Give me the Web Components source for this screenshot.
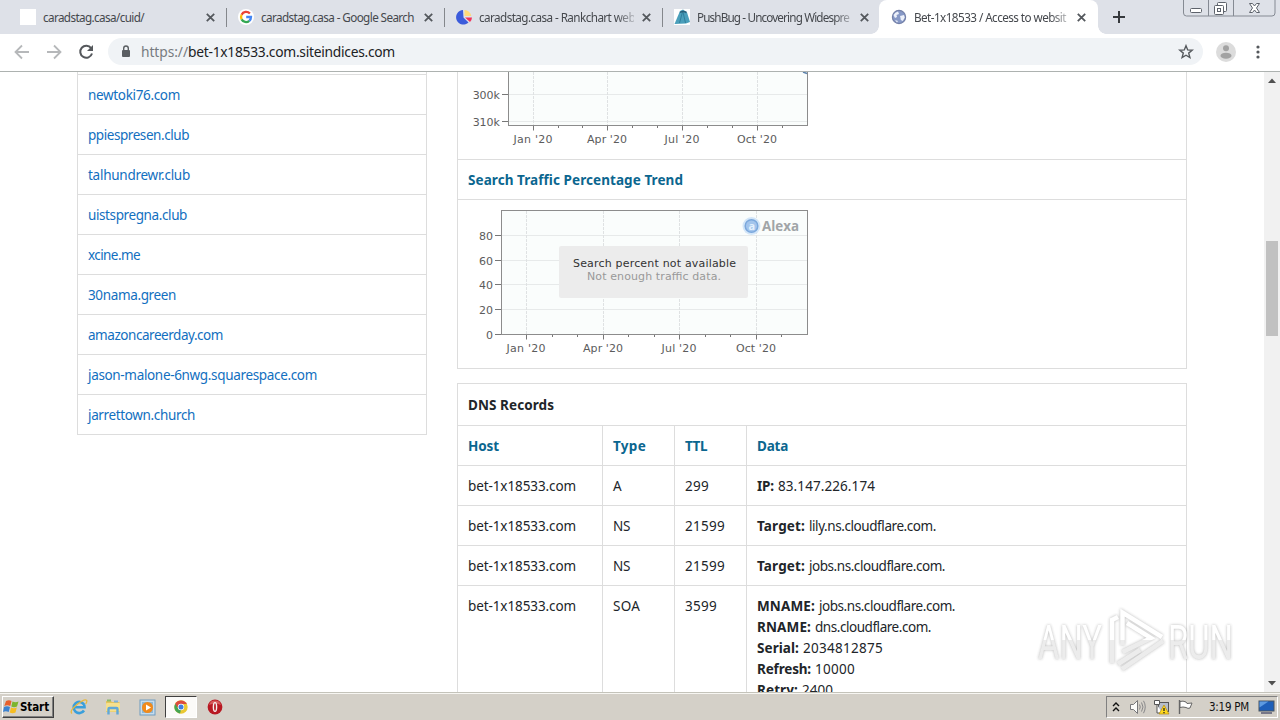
<!DOCTYPE html>
<html lang="en">
<head>
<meta charset="utf-8">
<title>Bet-1x18533 / Access to website</title>
<style>
body{
    margin: 0;
    width: 1280px;
    height: 720px;
    overflow: hidden;
    background: #fff;
    font-family: "Noto Sans", "Open Sans", sans-serif;
    font-size: 13.5px;
    color: #212529;
}
.ventana{
    position: relative;
    display: flex;
    flex-direction: column;
    height: 720px;
}
.pagina{
    display: flex;
    height: 620px;
    overflow: hidden;
}
.contenido{
    flex: 1;
    display: grid;
    grid-template-columns: 350px 730px;
    column-gap: 30px;
    padding-left: 77px;
    align-items: start;
    overflow: hidden;
    height: 620px;
}
</style>
</head>
<body>
<div class="ventana">
    <tab-strip>
        <browser-tab icon="blank" w="101">caradstag.casa/cuid/</browser-tab>
        <browser-tab icon="google" w="153">caradstag.casa - Google Search</browser-tab>
        <browser-tab icon="rank" w="156">caradstag.casa - Rankchart web</browser-tab>
        <browser-tab icon="bug" w="152" nosep>PushBug - Uncovering Widespre</browser-tab>
        <browser-tab icon="globe" w="152" active>Bet-1x18533 / Access to websit</browser-tab>
    </tab-strip>
    <tool-bar></tool-bar>
    <div class="pagina">
        <div class="contenido">
            <site-list></site-list>
            <main>
                <traffic-panel></traffic-panel>
                <dns-records></dns-records>
            </main>
        </div>
        <scroll-bar></scroll-bar>
    </div>
    <task-bar></task-bar>
    <water-mark></water-mark>
</div>

<script>
const icons={
    blank:`<svg width="16" height="16"><rect width="16" height="16" fill="#fff"/></svg>`,
    google:`<svg width="16" height="16" viewBox="0 0 16 16"><circle cx="8" cy="8" r="8" fill="#fff"/>
        <g fill="none" stroke-width="2.3"><path d="M11.9 4.6A5 5 0 0 0 3.6 5.8" stroke="#ea4335"/><path d="M3.6 5.8A5 5 0 0 0 3.6 10.4" stroke="#fbbc05"/>
        <path d="M3.6 10.4A5 5 0 0 0 11.3 11.8" stroke="#34a853"/><path d="M11.3 11.8A5 5 0 0 0 13 8H8.2" stroke="#4285f4"/></g></svg>`,
    rank:`<svg width="16" height="16" viewBox="0 0 16 16"><path d="M7 1A7.3 7.3 0 1 0 12.5 13.5L7.5 8.5Z" fill="#3b5bdb"/>
        <path d="M8.500 1A7 7 0 0 1 15.300 7H8.500Z" fill="#ffd97a"/><path d="M9 8.500H16A7 7 0 0 1 14 13Z" fill="#f0325a"/></svg>`,
    bug:`<svg width="16" height="16" viewBox="0 0 16 16"><rect width="16" height="16" fill="#fff"/><path d="M6 2l3-1.500 4 3 3 9.500-4 1.500L.5 15z" fill="#4a9fbb"/>
        <path d="M8.500 3l-3 11M9 3l2.500 11" stroke="#2f7f9c"/><path d="M6 3.500q3-2 6.500 0" stroke="#2a5f78" stroke-width="1.500" fill="none"/></svg>`,
    globe:`<svg width="16" height="16" viewBox="0 0 16 16"><circle cx="8" cy="8" r="6.600" fill="#8799c7" stroke="#7480a8" stroke-width="1.200"/>
        <path d="M2.500 6q1.500-3 4.500-3.500L8 5 5.500 6 6 8 4 9zM9 7l4-1 .8 2.500-2 3.500-2-1-.5-3zM4 11l3 1-1 1.500z" fill="#edf1fa"/></svg>`,
    close:`<svg width="9" height="9" viewBox="0 0 9 9"><path d="M.8 .8l7.400 7.400M8.200 .8L.8 8.200" stroke="#54585d" stroke-width="1.800"/></svg>`
};

// small base class, every element only brings its own markup
class Pieza extends HTMLElement{
    constructor(){
        super();
        this.attachShadow({mode: 'open'});
    }
    connectedCallback(){
        this.shadowRoot.innerHTML=this.render();
    }
}

class BrowserTab extends Pieza{
    render(){
        return `<style>
:host{ display: block; width: 218px; height: 34px; flex: none; }
.tab{
    display: grid;
    grid-template-columns: 16px 155px 9px;
    column-gap: 7px;
    align-items: center;
    padding-left: 12px;
    height: 34px;
    box-sizing: border-box;
    position: relative;
}
.titulo{
    font-size: 11.7px;
    line-height: 18px;
    overflow: hidden;
    white-space: nowrap;
    color: #45484d;
    -webkit-mask-image: linear-gradient(90deg,#000 137px,rgba(0,0,0,.3) 154px);
}
.corto{ -webkit-mask-image: none; }
.close{ display: flex; padding-left: 1px; width: 9px; }
svg{ display: block; flex: none; }
.raya{ position: absolute; right: -1px; top: 8px; width: 1px; height: 19px; background: #84878c; }
:host([active]) .tab{ background: #fff; border-radius: 8px 8px 0 0; margin: 0 0 0 -1px; padding-left: 12px; }
:host([active]) .tab::before, :host([active]) .tab::after{
    content: ""; position: absolute; bottom: 0; width: 8px; height: 8px;
}
:host([active]) .tab::before{ left: -8px; background: radial-gradient(circle at 0 0,transparent 7.5px,#fff 8px); }
:host([active]) .tab::after{ right: -8px; background: radial-gradient(circle at 100% 0,transparent 7.5px,#fff 8px); }
</style>
<div class="tab">${icons[this.getAttribute('icon')]}
    <div class="titulo ${this.getAttribute('icon')=='blank'||this.getAttribute('icon')=='google'?'corto':''}"><fit-text w="${this.getAttribute('w')}"><slot></slot></fit-text></div>
    <div class="close">${icons.close}</div>
    ${this.hasAttribute('active')||this.hasAttribute('nosep')?'':'<div class="raya"></div>'}
</div>`;
    }
}

class TabStrip extends Pieza{
    render(){
        return `<style>
:host{ display: flex; height: 34px; flex: none; background: #dee1e8; padding-left: 8px; }
.mas{ padding: 10px 0 0 14px; flex: 1; }
</style>
<slot></slot>
<div class="mas"><svg width="14" height="14"><path d="M7 1v12M1 7h12" stroke="#36393d" stroke-width="2"/></svg></div>
<svg width="97" height="18" fill="none" stroke="#858a93">
    <path d="M.5 0V13q0 3 3 3H89q3 0 3-3V0M25.500 0V16M50.500 0V16"/>
    <g stroke="#5d626b" fill="#fff"><rect x="7.500" y="8.500" width="11" height="4" rx="1"/>
    <rect x="34.500" y="2.500" width="9" height="9" rx="1"/><rect x="31.500" y="5.500" width="9" height="9" rx="1"/><rect x="34.500" y="8.500" width="3" height="3"/>
    <path d="M66.500 3.500h3l2 2.500 2-2.500h3L73.500 8l3 4.500h-3l-2-2.500-2 2.500h-3L69.500 8z"/></g>
</svg>`;
    }
}

class ToolBar extends Pieza{
    render(){
        return `<style>
:host{ display: flex; align-items: center; height: 38px; flex: none; box-sizing: border-box; border-bottom: 1px solid #adb2b0; background: #fff; padding: 0 15px 2px 14px; }
.nav{ display: flex; gap: 16px; width: 94px; }
.url{
    display: grid;
    grid-template-columns: 18px auto auto 1fr 16px;
    align-items: center;
    width: 1095px;
    height: 27px;
    box-sizing: border-box;
    padding: 0 9px 0 13px;
    border-radius: 14px;
    background: #f0f3f6;
}
.url fit-text{ font-size: 13.8px; line-height: 20px; }
.gris{ color: #777b80; }
.negro{ color: #202124; }
svg{ display: block; }
.avatar{ margin: 0 15px 0 13px; }
</style>
<div class="nav">
    <svg width="16" height="16" fill="none" stroke="#b6b8ba" stroke-width="1.800"><path d="M15 8H2M8 1.500L1.500 8 8 14.500"/></svg>
    <svg width="16" height="16" fill="none" stroke="#b6b8ba" stroke-width="1.800"><path d="M1 8H14M8 1.500L14.500 8 8 14.500"/></svg>
    <svg width="16" height="16"><path d="M13.100 4.200A6 6 0 1 0 14 9.500" fill="none" stroke="#55585c" stroke-width="2"/><path d="M15 1v6H9z" fill="#55585c"/></svg>
</div>
<div class="url">
    <svg width="10" height="13"><rect x="1" y="5" width="8" height="7" rx="1" fill="#5a5e62"/><path d="M2.700 5V3.300a2.300 2.300 0 0 1 4.600 0V5" fill="none" stroke="#5a5e62" stroke-width="1.400"/></svg>
    <fit-text class="gris" w="47" style="margin-left:2px">https://</fit-text>
    <fit-text class="negro" w="207">bet-1x18533.com.siteindices.com</fit-text>
    <span></span>
    <svg width="16" height="16" viewBox="0 0 16 16"><path d="M8 1.700l1.700 4.200 4.500.3-3.500 2.900 1.200 4.500L8 11.200l-3.900 2.400 1.200-4.500L1.800 6.200l4.500-.3z" fill="none" stroke="#55595d" stroke-width="1.400"/></svg>
</div>
<svg class="avatar" width="20" height="20"><circle cx="10" cy="10" r="10" fill="#dcdcdc"/><circle cx="10" cy="6.300" r="3" fill="#a2a2a2"/><ellipse cx="10" cy="13.700" rx="5.500" ry="3" fill="#a2a2a2"/></svg>
<svg width="14" height="16" fill="#55585c"><circle cx="7" cy="3" r="1.600"/><circle cx="7" cy="8" r="1.600"/><circle cx="7" cy="13" r="1.600"/></svg>`;
    }
}

class SiteList extends Pieza{
    render(){
        const sitios=[['newtoki76.com',92],['ppiespresen.club',101],['talhundrewr.club',102],['uistspregna.club',99],['xcine.me',52],
            ['30nama.green',88],['amazoncareerday.com',135],['jason-malone-6nwg.squarespace.com',229],['jarrettown.church',107]];
        return `<style>
:host{ display: block; }
ul{ list-style: none; margin: 0; padding: 2px 0 0; border: solid #ddd; border-width: 0 1px; }
li{ border-top: 1px solid #ddd; padding: 10px 10px 8px; height: 21px; line-height: 21px; }
li:last-child{ border-bottom: 1px solid #ddd; }
a{ color: #126fc0; }
</style>
<ul>${sitios.map(s=>`<li><a><fit-text w="${s[1]}">${s[0]}</fit-text></a></li>`).join('')}</ul>`;
    }
}

class TrafficPanel extends Pieza{
    ejeX(xs,minor,y,top){
        const meses=["Jan '20","Apr '20","Jul '20","Oct '20"], anchos=[39,40,35,40];
        return xs.map((x,i)=>`<path d="M${x} ${top}V${y}" stroke="#dfe2e3" stroke-dasharray="3 1"/><path d="M${x} ${y}v5" stroke="#777"/>
            <text x="${x-anchos[i]/2-.5}" y="${y+17.500}" textLength="${anchos[i]}">${meses[i]}</text>`).join('')
            +minor.map(x=>`<path d="M${x} ${y}v2.500" stroke="#777"/>`).join('');
    }
    ejeY(filas,left,fin){
        return filas.map(f=>`<path d="M${left} ${f[0]}H807" stroke="#e7eaea"/><path d="M${left-6} ${f[0]}h6" stroke="#777"/>
            <text x="${fin}" y="${f[0]+4}" text-anchor="end">${f[1]}</text>`).join('');
    }
    render(){
        return `<style>
:host{ display: block; border: solid #ddd; border-width: 0 1px 1px; box-sizing: border-box; width: 730px; height: 297px; margin-bottom: 14px; }
svg{ display: block; }
svg text{ font: 11px "DejaVu Sans", sans-serif; fill: #5c5c5c; }
h4{ margin: 0; padding: 10px 10px 8px; border: solid #ddd; border-width: 1px 0; font-size: 13.5px; line-height: 21px; height: 21px; color: #0b668f; }
svg .aviso{ fill: #333; }
svg .nota{ fill: #999; }
svg .alexa{ font: bold 14px "Open Sans", "Noto Sans", sans-serif; fill: #a1a5a7; }
svg .letra{ font: bold 11px "Open Sans", sans-serif; fill: #e4f1fd; }
</style>
<svg width="728" height="87" viewBox="458 72 728 87">
    <rect x="508.500" y="60.500" width="299" height="65" fill="#fafdfc"/>
    ${this.ejeY([[94.5,'300k'],[121.5,'310k']],508,500)}
    ${this.ejeX([533.5,607.5,682.5,757.5],[558.5,582.5,632.5,657.5,707.5,732.5,782.5],125.5,72)}
    <rect x="508.500" y="60.500" width="299" height="65" fill="none" stroke="#8c8c8c"/>
    <path d="M803 72l4 1.500" stroke="#5b82ad" stroke-width="1.500"/>
</svg>
<h4><fit-text w="215">Search Traffic Percentage Trend</fit-text></h4>
<svg width="728" height="168" viewBox="458 200 728 168">
    <rect x="501.500" y="210.500" width="306" height="124" fill="#fafdfc"/>
    ${this.ejeY([[235.5,'80'],[260.5,'60'],[284.5,'40'],[309.5,'20'],[334.5,'0']],501,493)}
    ${this.ejeX([526.5,603.5,679.5,756.5],[552.5,577.5,628.5,654.5,705.5,730.5,781.5],334.5,211)}
    <rect x="501.500" y="210.500" width="306" height="124" fill="none" stroke="#8c8c8c"/>
    <circle cx="751.500" cy="226" r="9" fill="#d3e6f8"/><circle cx="751.500" cy="226" r="6.300" fill="#a3c5ec" stroke="#7ba8dc" stroke-width="1.500"/>
    <text class="letra" x="748.500" y="229.500">a</text>
    <text class="alexa" x="762" y="231" textLength="37" lengthAdjust="spacingAndGlyphs">Alexa</text>
    <rect x="559" y="246" width="189" height="52" rx="2" fill="#ececec"/>
    <text class="aviso" x="573" y="267" textLength="163">Search percent not available</text>
    <text class="nota" x="587" y="280" textLength="134">Not enough traffic data.</text>
</svg>`;
    }
}

class DnsRecords extends Pieza{
    render(){
        const filas=[
            ['A',9,'299',24,[['IP:',17,'83.147.226.174',97]]],
            ['NS',17,'21599',40,[['Target:',48,'lily.ns.cloudflare.com.',127]]],
            ['NS',17,'21599',40,[['Target:',48,'jobs.ns.cloudflare.com.',136]]],
            ['SOA',27,'3599',32,[['MNAME:',58,'jobs.ns.cloudflare.com.',136],['RNAME:',54,'dns.cloudflare.com.',116],
                ['Serial:',42,'2034812875',80],['Refresh:',54,'10000',40],['Retry:',41,'2400',31]]]
        ];
        return `<style>
:host{ display: block; border: 1px solid #ddd; box-sizing: border-box; width: 730px; line-height: 21px; }
h3{ margin: 0; font-size: 13.5px; line-height: 21px; padding: 11px 10px 9px; }
.fila{ display: grid; grid-template-columns: 144px 72px 72px 1fr; border-top: 1px solid #ddd; }
.fila > div{ padding: 10px 10px 8px; border-left: 1px solid #ddd; min-height: 21px; }
.fila > div:first-child{ border-left: 0; }
.cabeza{ color: #0b668f; font-weight: bold; }
.dato{ display: flex; gap: 4px; height: 21px; }
</style>
<h3><fit-text w="86">DNS Records</fit-text></h3>
<div class="fila cabeza"><div><fit-text w="31">Host</fit-text></div><div><fit-text w="33">Type</fit-text></div><div><fit-text w="22">TTL</fit-text></div><div><fit-text w="31">Data</fit-text></div></div>
${filas.map(f=>`<div class="fila">
    <div><fit-text w="108">bet-1x18533.com</fit-text></div>
    <div><fit-text w="${f[1]}">${f[0]}</fit-text></div>
    <div><fit-text w="${f[3]}">${f[2]}</fit-text></div>
    <div>${f[4].map(d=>`<div class="dato"><b><fit-text w="${d[1]}">${d[0]}</fit-text></b><fit-text w="${d[3]}">${d[2]}</fit-text></div>`).join('')}</div>
</div>`).join('')}`;
    }
}

class ScrollBar extends Pieza{
    render(){
        return `<style>
:host{ display: flex; flex-direction: column; align-items: center; width: 16px; height: 620px; background: #f1f1f1; }
.thumb{ width: 12px; height: 95px; margin: 152px 0 auto; background: #c1c1c1; }
svg{ display: block; }
</style>
<svg width="16" height="17"><path d="M4 11l4-4.500 4 4.500z" fill="#505050"/></svg>
<div class="thumb"></div>
<svg width="16" height="17"><path d="M4 6l4 4.500L12 6z" fill="#505050"/></svg>`;
    }
}

class TaskBar extends Pieza{
    render(){
        return `<style>
:host{ display: flex; align-items: center; height: 28px; flex: none; box-sizing: border-box; background: #d4d0c8; border-top: 1px solid #c4c3ba; box-shadow: inset 0 1px #f7f6f2; padding: 1px 2px 0 2px; font-family: "DejaVu Sans Condensed", "DejaVu Sans", sans-serif; }
.start{
    display: flex;
    align-items: center;
    width: 52px;
    height: 22px;
    box-sizing: border-box;
    border: 1px solid;
    border-color: #fff #404040 #404040 #fff;
    box-shadow: inset -1px -1px #808080;
    font-size: 11.5px;
    font-weight: bold;
    color: #000;
}
.iconos{ display: grid; grid-template-columns: 34px 34px 34px 34px 33px; padding-left: 8px; height: 24px; align-items: center; justify-items: center; flex: none; }
.pulsado{
    display: flex;
    align-items: center;
    justify-content: center;
    width: 32px;
    height: 22px;
    box-sizing: border-box;
    border: 1px solid;
    border-color: #404040 #fff #fff #404040;
    background: #fbfaf8;
}
.bandeja{
    display: grid;
    grid-template-columns: 17px 26px 23px 24px 59px 1fr;
    justify-items: center;
    align-items: center;
    margin-left: auto;
    width: 172px;
    height: 22px;
    box-sizing: border-box;
    border: 1px solid;
    border-color: #808080 #fff #fff #808080;
    font-size: 11.5px;
    color: #111;
}
.hora{ justify-self: end; margin-right: 7px; }
svg{ display: block; flex: none; }
</style>
<div class="start">
    <svg width="17" height="16" viewBox="0 0 17 16"><path d="M3 2q3-1.500 5.500 0L7.300 7q-3-1.500-6 0z" fill="#e8602c"/><path d="M9.500 2.500q3 1.500 6 0L14 7.500q-3 1.500-5.700 0z" fill="#7cb52e"/>
    <path d="M1 8q3-1.500 6 0L5.700 13q-3-1.500-5.700 0z" fill="#3c82d0"/><path d="M8 8.500q3 1.500 5.800 0L12.500 13.500q-3 1.500-5.700 0z" fill="#f6bd22"/></svg>
    <fit-text w="29">Start</fit-text>
</div>
<div class="iconos">
    <svg width="18" height="18" viewBox="0 0 18 18"><path d="M14 6.500A5.600 5.600 0 1 0 14 12.500M4 9.300H14.500Q14.500 7.500 14 6.500" fill="none" stroke="#3a9fdb" stroke-width="2.600"/>
        <path d="M2 15.500Q-1 13 7 6.500 14.500.5 16.500 2.200q1 1-.8 3.800" fill="none" stroke="#e8b83c" stroke-width="1.300"/></svg>
    <svg width="18" height="18" viewBox="0 0 18 18"><path d="M2 3h5l1 1h7.500v10H2z" fill="#e5c45c"/><path d="M3 1.500h4v2H3z" fill="#8dbb6a"/><path d="M10 2.500h4v2h-4z" fill="#7fb2d8"/><rect x="2" y="5" width="14" height="8.500" rx="1" fill="#f6e08c"/>
        <path d="M4.500 16.500V11q0-1 1-1h7q1 0 1 1v5.500" fill="none" stroke="#61a8d7" stroke-width="2.400"/></svg>
    <svg width="17" height="17" viewBox="0 0 17 17"><rect x="1" y="1" width="15" height="15" fill="#c6dced" stroke="#6f9cc0"/><rect x="3" y="3" width="11" height="11" fill="#8db8d7"/><circle cx="8.500" cy="8.500" r="5.500" fill="#f08a1c"/><path d="M7 5.500v6l5-3z" fill="#fff"/></svg>
    <div class="pulsado"><svg width="14" height="14" viewBox="0 0 14 14"><circle cx="7" cy="7" r="6.700" fill="#eac832"/><path d="M7 7H1.500L1.200 3.700A6.700 6.700 0 0 1 12.900 4H7z" fill="#dc4b3e"/>
        <path d="M1.200 3.700L4.500 9 7 9.800 6 13.600A6.700 6.700 0 0 1 1.200 3.700z" fill="#45a452"/><circle cx="7" cy="7" r="3.200" fill="#fff"/><circle cx="7" cy="7" r="2.500" fill="#3f7ee0"/></svg></div>
    <svg width="16" height="16" viewBox="0 0 16 16"><circle cx="8" cy="8" r="7.400" fill="#b81822"/><path d="M2 6a6.300 6.300 0 0 1 12 0Q8 3 2 6z" fill="#d75a5c"/><ellipse cx="8" cy="8" rx="2.300" ry="5" fill="#f6efee"/><ellipse cx="8" cy="8" rx=".9" ry="3.800" fill="#b81822"/></svg>
</div>
<div class="bandeja">
    <svg width="8" height="10" fill="none" stroke="#111" stroke-width="1.400"><path d="M1 4l3-3 3 3M1 9l3-3 3 3"/></svg>
    <svg width="17" height="16" viewBox="0 0 17 16"><path d="M1.500 5.500h3l4-4v13l-4-4h-3z" fill="#fbfbf9" stroke="#77777a"/><path d="M10.500 5.500q1.500 2.500 0 5M12.500 3.500q3 4.500 0 9M14.500 1.800q3.500 6 0 12.400" fill="none" stroke="#88888a"/></svg>
    <svg width="17" height="16" viewBox="0 0 17 16"><rect x="5.500" y="3.500" width="10" height="9" fill="#b6bdc9" stroke="#555"/><path d="M1.500 1.500h5v4h-5zM4 5.500v8.500h5" fill="#fff" stroke="#555"/><path d="M11 6l5 9H6z" fill="#ffd91c" stroke="#b58a10" stroke-width=".7"/><path d="M11 9v3m0 1v1.200" stroke="#222" stroke-width="1.300"/></svg>
    <svg width="17" height="16" viewBox="0 0 17 16"><path d="M2.500 1v14" stroke="#666" stroke-width="1.400"/><path d="M3 2.500q3-1 6 .5l1 1.500 5-.5-2 5q-2 1-4-.5-3-1-6 0z" fill="#fff" stroke="#666"/></svg>
    <fit-text class="hora" w="40">3:19 PM</fit-text>
    <svg width="17" height="15" viewBox="0 0 17 15"><rect x="1" y="1" width="15" height="10" fill="#1e5fb9" stroke="#4a545f"/><path d="M1.500 1.500h9l-9 6z" fill="#5d9ae0"/><path d="M3 13h11" stroke="#778" stroke-width="2"/></svg>
</div>`;
    }
}

class WaterMark extends Pieza{
    render(){
        return `<style>
:host{ display: block; position: absolute; left: 1030px; top: 600px; pointer-events: none; }
svg{ display: block; overflow: visible; filter: drop-shadow(0 0 1.500px rgba(80,80,80,.45)); opacity: .9; }
text{ font: 48px Roboto, "Liberation Sans", sans-serif; fill: url(#brillo); }
</style>
<svg width="230" height="84" viewBox="1030 600 230 84">
    <defs><linearGradient id="brillo" gradientUnits="userSpaceOnUse" x1="0" y1="620" x2="0" y2="662"><stop offset=".47" stop-color="#fff"/><stop offset=".48" stop-color="#ebebeb"/></linearGradient></defs>
    <text x="1038" y="659" textLength="64" lengthAdjust="spacingAndGlyphs">ANY</text>
    <g fill="none" stroke="url(#brillo)" stroke-width="4.500"><path d="M1122.500 645V612.500L1162 637M1163 641L1122 669M1122.500 652L1151 638 1127 623"/><path d="M1112 663V620l6-3M1118 664L1140 650"/></g>
    <text x="1168" y="659" textLength="65" lengthAdjust="spacingAndGlyphs">RUN</text>
</svg>`;
    }
}

// one line of text tracked out to the given width
class FitText extends Pieza{
    render(){
        return `<style>:host{ display: inline-block; white-space: nowrap; }</style><slot></slot>`;
    }
    connectedCallback(){
        super.connectedCallback();
        const slot=this.shadowRoot.querySelector('slot');
        const texto=slot.assignedNodes({flatten: true}).map(n=>n.textContent).join('').trim();
        const natural=this.getBoundingClientRect().width;
        this.style.letterSpacing=(this.getAttribute('w')-natural)/texto.length+'px';
    }
}

customElements.define('tab-strip', TabStrip);
customElements.define('browser-tab', BrowserTab);
customElements.define('tool-bar', ToolBar);
customElements.define('site-list', SiteList);
customElements.define('traffic-panel', TrafficPanel);
customElements.define('dns-records', DnsRecords);
customElements.define('scroll-bar', ScrollBar);
customElements.define('task-bar', TaskBar);
customElements.define('water-mark', WaterMark);
customElements.define('fit-text', FitText);
</script>
</body>
</html>
